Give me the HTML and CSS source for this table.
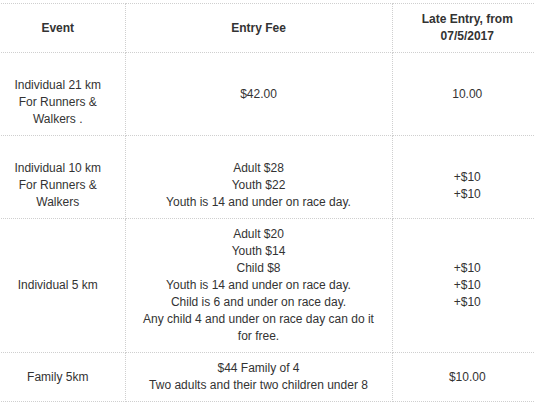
FILE: index.html
```html
<!DOCTYPE html>
<html>
<head>
<meta charset="utf-8">
<link rel="stylesheet" href="styles.css">
</head>
<body>
<table class="fees">
  <colgroup>
    <col class="c-event">
    <col class="c-fee">
    <col class="c-late">
  </colgroup>
  <thead>
    <tr>
      <th>Event</th>
      <th>Entry Fee</th>
      <th>Late Entry, from<br>07/5/2017</th>
    </tr>
  </thead>
  <tbody>
    <tr>
      <td class="lift">Individual 21 km<br>For Runners &amp;<br>Walkers .</td>
      <td>$42.00</td>
      <td>10.00</td>
    </tr>
    <tr>
      <td class="lift">Individual 10 km<br>For Runners &amp;<br>Walkers</td>
      <td class="lift">Adult $28<br>Youth $22<br>Youth is 14 and under on race day.</td>
      <td class="lift">+$10<br>+$10</td>
    </tr>
    <tr>
      <td>Individual 5 km</td>
      <td>Adult $20<br>Youth $14<br>Child $8<br>Youth is 14 and under on race day.<br>Child is 6 and under on race day.<br>Any child 4 and under on race day can do it<br>for free.</td>
      <td>+$10<br>+$10<br>+$10</td>
    </tr>
    <tr>
      <td>Family 5km</td>
      <td>$44 Family of 4<br>Two adults and their two children under 8</td>
      <td>$10.00</td>
    </tr>
  </tbody>
</table>
</body>
</html>
```

FILE: styles.css
```css
html, body {
  margin: 0;
  padding: 0;
  background: #fff;
}

body {
  overflow: hidden;
}

.fees {
  border-collapse: collapse;
  table-layout: fixed;
  width: 551px;
  margin: 3px 0 0 -9px;
  font-family: "Liberation Sans", Arial, sans-serif;
  font-size: 12px;
  line-height: 17px;
  color: #333;
}

.c-event { width: 134px; }
.c-fee { width: 267px; }
.c-late { width: 150px; }

.fees th,
.fees td {
  border: 1px dotted #cfcfcf;
  padding: 7px 8px;
  text-align: center;
  vertical-align: middle;
}

.fees th:first-child,
.fees td:first-child {
  border-left: none;
}

.fees th:last-child,
.fees td:last-child {
  border-right: none;
}

.fees th {
  font-weight: bold;
}

.fees td.lift {
  padding-top: 24px;
}
```
